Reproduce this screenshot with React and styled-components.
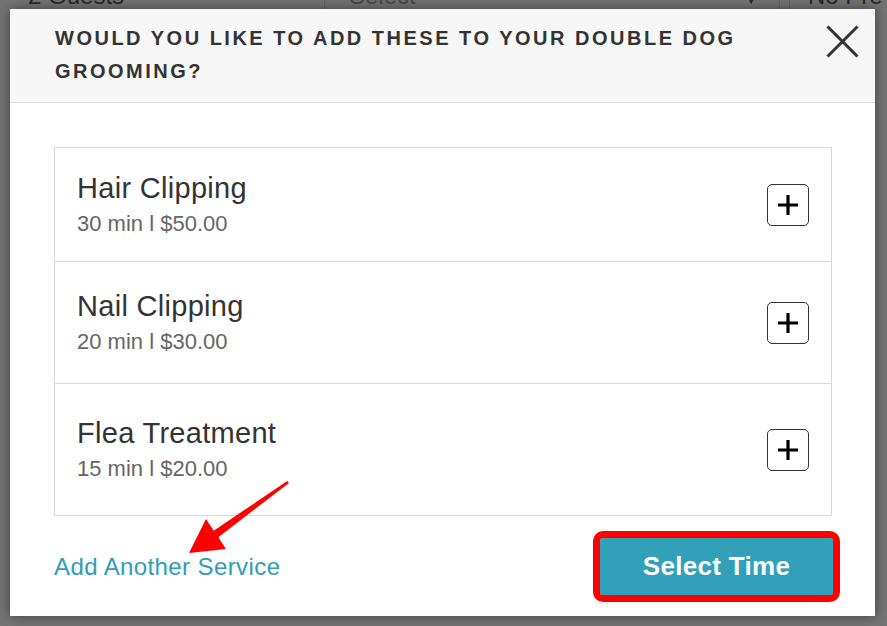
import React from "react";
import styled, { createGlobalStyle } from "styled-components";

const GlobalStyle = createGlobalStyle`
  body {
    margin: 0;
    font-family: "Liberation Sans", Arial, Helvetica, sans-serif;
    overflow: hidden;
  }
`;

// page behind the modal
const Page = styled.div`
  position: relative;
  width: 887px;
  height: 626px;
  overflow: hidden;
  background: #f2f2f2;
`;

const BgRow = styled.div`
  display: flex;
  height: 100%;
  margin-top: -18px;
`;

const BgCol = styled.div`
  width: ${(p) => p.$width}px;
  padding: 0 0 0 ${(p) => p.$pad || 0}px;
  box-sizing: border-box;
  border-right: ${(p) => (p.$line ? "1px solid #ccc" : "none")};
  font-size: 24px;
  color: #555;
  display: flex;
  justify-content: space-between;
  align-items: flex-start;
`;

const BgSelect = styled.div`
  display: flex;
  justify-content: space-between;
  width: 100%;
  padding: 0 20px 0 24px;
  color: #999;
  span:last-child {
    font-size: 16px;
    color: #555;
    padding-top: 8px;
  }
`;

const Overlay = styled.div`
  position: absolute;
  inset: 0;
  background: rgba(0, 0, 0, 0.52);
`;

const Modal = styled.div`
  position: absolute;
  left: 10px;
  top: 9px;
  width: 865px;
  height: 607px;
  background: #fff;
  box-shadow: 0 0 12px rgba(0, 0, 0, 0.45);
  display: flex;
  flex-direction: column;
`;

const Header = styled.div`
  display: flex;
  justify-content: space-between;
  align-items: flex-start;
  background: #f7f7f7;
  border-bottom: 1px solid #dcdcdc;
  padding: 13px 16px 14px 45px;
  height: 94px;
  box-sizing: border-box;
`;

const Title = styled.h2`
  margin: 0;
  width: 760px;
  font-size: 20px;
  line-height: 33px;
  font-weight: bold;
  letter-spacing: 2.5px;
  text-transform: uppercase;
  color: #333;
`;

const CloseBtn = styled.button`
  margin-top: 3px;
  width: 33px;
  height: 33px;
  padding: 0;
  border: none;
  background: transparent;
  cursor: pointer;
  display: flex;
`;

const Body = styled.div`
  flex: 1;
  display: flex;
  flex-direction: column;
  padding: 44px 43px 22px 44px;
`;

const List = styled.ul`
  list-style: none;
  margin: 0;
  padding: 0;
  border: 1px solid #d9d9d9;
`;

const Row = styled.li`
  display: flex;
  align-items: center;
  justify-content: space-between;
  height: ${(p) => p.$height}px;
  padding: 0 22px;
  box-sizing: border-box;
  & + & {
    border-top: 1px solid #d9d9d9;
  }
`;

const ServiceInfo = styled.div`
  display: flex;
  flex-direction: column;
`;

const ServiceName = styled.div`
  font-size: 29px;
  line-height: 32px;
  letter-spacing: 0.3px;
  color: #333;
`;

const ServiceMeta = styled.div`
  margin-top: 6px;
  font-size: 22px;
  line-height: 28px;
  color: #666;
`;

const AddBtn = styled.button`
  width: 42px;
  height: 42px;
  border: 1px solid #333;
  border-radius: 5px;
  background: #fff;
  padding: 0;
  display: flex;
  align-items: center;
  justify-content: center;
  cursor: pointer;
`;

const Footer = styled.div`
  display: flex;
  justify-content: space-between;
  align-items: center;
  margin-top: 22px;
`;

const AddLink = styled.a`
  font-size: 24px;
  letter-spacing: 0.4px;
  color: #2f9db4;
  text-decoration: none;
  cursor: pointer;
`;

const SelectBtn = styled.button`
  width: 233px;
  height: 57px;
  margin-right: -1px;
  border: none;
  border-radius: 3px;
  background: #31a0b8;
  color: #fff;
  font-family: inherit;
  font-size: 26px;
  font-weight: bold;
  letter-spacing: 0.3px;
  cursor: pointer;
  outline: 7px solid #ff0000;
  outline-offset: 0;
`;

const Annotation = styled.svg`
  position: absolute;
  inset: 0;
  pointer-events: none;
`;

const services = [
  { name: "Hair Clipping", time: "30 min", price: "$50.00", height: 113 },
  { name: "Nail Clipping", time: "20 min", price: "$30.00", height: 122 },
  { name: "Flea Treatment", time: "15 min", price: "$20.00", height: 132 },
];

function PlusIcon() {
  return (
    <svg width="22" height="22" viewBox="0 0 22 22">
      <path d="M11 1v20M1 11h20" stroke="#000" strokeWidth="3.2" />
    </svg>
  );
}

function CloseIcon() {
  return (
    <svg width="33" height="33" viewBox="0 0 33 33">
      <path d="M1.5 1.5l30 30M31.5 1.5l-30 30" stroke="#333" strokeWidth="3" />
    </svg>
  );
}

function App() {
  return (
    <>
      <GlobalStyle />
      <Page>
        <BgRow>
          <BgCol $width={325} $pad={28} $line>
            2 Guests
          </BgCol>
          <BgCol $width={455} $line>
            <BgSelect>
              <span>Select</span>
              <span>▼</span>
            </BgSelect>
          </BgCol>
          <BgCol $width={10} $line />
          <BgCol $width={97} $pad={18}>
            No Pre
          </BgCol>
        </BgRow>
        <Overlay />
        <Modal>
          <Header>
            <Title>Would you like to add these to your Double Dog Grooming?</Title>
            <CloseBtn aria-label="Close">
              <CloseIcon />
            </CloseBtn>
          </Header>
          <Body>
            <List>
              {services.map((s) => (
                <Row key={s.name} $height={s.height}>
                  <ServiceInfo>
                    <ServiceName>{s.name}</ServiceName>
                    <ServiceMeta>
                      {s.time} l {s.price}
                    </ServiceMeta>
                  </ServiceInfo>
                  <AddBtn aria-label={`Add ${s.name}`}>
                    <PlusIcon />
                  </AddBtn>
                </Row>
              ))}
            </List>
            <Footer>
              <AddLink>Add Another Service</AddLink>
              <SelectBtn>Select Time</SelectBtn>
            </Footer>
          </Body>
        </Modal>
        <Annotation width="887" height="626" viewBox="0 0 887 626">
          <polygon
            points="287.2,481 213.7,530.8 206,519 189,553 226,549 218.3,537.2 289,483"
            fill="#ff0000"
          />
        </Annotation>
      </Page>
    </>
  );
}

export default App;
